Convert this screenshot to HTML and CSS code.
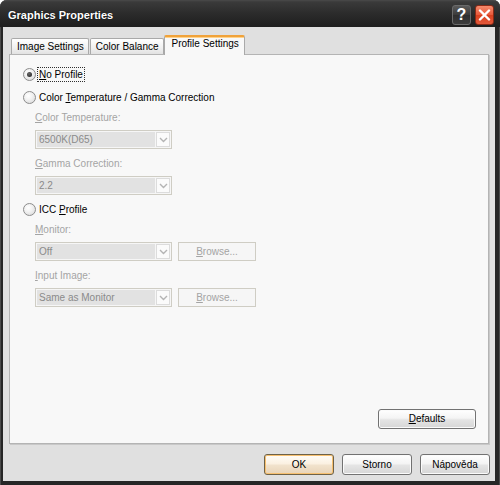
FILE: index.html
```html
<!DOCTYPE html>
<html>
<head>
<meta charset="utf-8">
<title>Graphics Properties</title>
<link rel="stylesheet" href="styles.css">
</head>
<body>
<div class="window">
  <div class="titlebar">
    <span class="title">Graphics Properties</span>
    <div class="caption-btns">
      <span class="cbtn help">?</span>
      <span class="cbtn close"><svg width="13" height="12" viewBox="0 0 13 12"><path d="M2 1.5 L11 10.5 M11 1.5 L2 10.5" stroke="#fff" stroke-width="2.4" stroke-linecap="round"/></svg></span>
    </div>
  </div>
  <div class="client">
    <div class="tabs">
      <div class="tab">Image Settings</div>
      <div class="tab">Color Balance</div>
      <div class="tab active">Profile Settings</div>
    </div>
    <div class="panel">
      <div class="radio-row first"><span class="radio checked"></span><span class="focus"><u>N</u>o Profile</span></div>
      <div class="radio-row second"><span class="radio"></span><span class="rtext">Color <u>T</u>emperature / Gamma Correction</span></div>
      <div class="sub">
        <div class="label"><u>C</u>olor Temperature:</div>
        <div class="field-row"><div class="combo"><span class="value">6500K(D65)</span><span class="arrow"><svg width="9" height="6" viewBox="0 0 9 6"><path d="M1 1 L4.5 4.5 L8 1" fill="none" stroke="#b4b4b4" stroke-width="1.4"/></svg></span></div></div>
        <div class="label"><u>G</u>amma Correction:</div>
        <div class="field-row"><div class="combo"><span class="value">2.2</span><span class="arrow"><svg width="9" height="6" viewBox="0 0 9 6"><path d="M1 1 L4.5 4.5 L8 1" fill="none" stroke="#b4b4b4" stroke-width="1.4"/></svg></span></div></div>
      </div>
      <div class="radio-row third"><span class="radio"></span><span class="rtext">ICC <u>P</u>rofile</span></div>
      <div class="sub">
        <div class="label"><u>M</u>onitor:</div>
        <div class="field-row"><div class="combo"><span class="value">Off</span><span class="arrow"><svg width="9" height="6" viewBox="0 0 9 6"><path d="M1 1 L4.5 4.5 L8 1" fill="none" stroke="#b4b4b4" stroke-width="1.4"/></svg></span></div><span class="browse"><u>B</u>rowse...</span></div>
        <div class="label"><u>I</u>nput Image:</div>
        <div class="field-row"><div class="combo"><span class="value">Same as Monitor</span><span class="arrow"><svg width="9" height="6" viewBox="0 0 9 6"><path d="M1 1 L4.5 4.5 L8 1" fill="none" stroke="#b4b4b4" stroke-width="1.4"/></svg></span></div><span class="browse"><u>B</u>rowse...</span></div>
      </div>
      <button class="btn defaults"><u>D</u>efaults</button>
    </div>
    <div class="footer">
      <button class="btn default-btn">OK</button>
      <button class="btn">Storno</button>
      <button class="btn">Nápověda</button>
    </div>
  </div>
</div>
</body>
</html>
```
FILE: styles.css
```css
html, body {
  margin: 0;
  padding: 0;
  background: #ffffff;
}
body {
  width: 500px;
  height: 485px;
  overflow: hidden;
  font-family: "Liberation Sans", Arial, sans-serif;
  font-size: 10px;
  color: #000;
}
.window {
  width: 500px;
  height: 485px;
  display: flex;
  flex-direction: column;
  background: #262626;
  border-radius: 7px 7px 0 0;
  box-shadow: inset 0 1px 0 #6a6a6a, inset 1px 0 0 #4a4a4a, inset -1px 0 0 #4a4a4a;
  box-sizing: border-box;
}
.titlebar {
  height: 27px;
  flex: none;
  display: flex;
  align-items: flex-start;
  justify-content: space-between;
  padding: 0 6px 0 8px;
  border-radius: 7px 7px 0 0;
  background: linear-gradient(#4a4a4a 0, #3a3a3a 2px, #2c2c2c 13px, #1e1e1e 27px);
}
.title {
  color: #fff;
  font-weight: bold;
  font-size: 11px;
  line-height: 13px;
  margin-top: 9px;
  text-shadow: 0 0 1px #000;
}
.caption-btns {
  display: flex;
  gap: 4px;
  margin-top: 5px;
}
.cbtn {
  width: 17px;
  height: 18px;
  border-radius: 3px;
  display: flex;
  align-items: center;
  justify-content: center;
}
.help {
  border: 1px solid #6a6a6a;
  background: linear-gradient(#5a5a5a, #3a3a3a 50%, #2e2e2e 51%, #3c3c3c);
  color: #fff;
  font-weight: bold;
  font-size: 16px;
  font-family: "Liberation Sans", Arial, sans-serif;
}
.close {
  border: 1px solid #8a2a16;
  background: linear-gradient(#f58a6c, #e8583a 50%, #d8401e 51%, #e2583a);
}
.client {
  flex: 1;
  margin: 0 5px 4px 3px;
  background: #e0e0e0;
  display: flex;
  flex-direction: column;
}
.tabs {
  display: flex;
  align-items: flex-end;
  height: 19px;
  margin-top: 8px;
  padding-left: 8px;
  position: relative;
  z-index: 1;
}
.tab {
  height: 16px;
  box-sizing: border-box;
  padding: 0 4px 0 5px;
  margin-right: 1px;
  border: 1px solid #a9a9a9;
  border-bottom: none;
  border-radius: 2px 2px 0 0;
  background: linear-gradient(#ffffff, #f0f0f0 60%, #e2e2e2);
  line-height: 15px;
  color: #000;
  white-space: nowrap;
}
.tab:nth-child(2) {
  margin-right: 0;
}
.tab.active {
  height: 20px;
  margin-bottom: -1px;
  padding: 0 5px 0 7px;
  border-top: 2px solid #f0a23a;
  background: #f8f8f8;
  line-height: 14px;
  box-shadow: inset 0 1px 0 #ffd28a;
}
.panel {
  flex: 1;
  margin: 0 6px;
  background: #f8f8f8;
  border: 1px solid #b4b4b4;
  box-shadow: 1px 1px 0 #c8c8c8;
  display: flex;
  flex-direction: column;
  padding-left: 13px;
}
.radio-row {
  display: flex;
  align-items: center;
  height: 13px;
  line-height: 13px;
  color: #000;
}
.radio-row.first { margin-top: 13px; }
.radio-row.second { margin-top: 10px; }
.radio-row.third { margin-top: 8px; }
.radio {
  width: 11px;
  height: 11px;
  border: 1px solid #8c8c8c;
  border-radius: 50%;
  background: radial-gradient(circle at 40% 35%, #ffffff 0, #f2f2f2 40%, #d4d4d4 100%);
  flex: none;
  margin-right: 2px;
  display: flex;
  align-items: center;
  justify-content: center;
}
.radio.checked::after {
  content: "";
  width: 5px;
  height: 5px;
  border-radius: 50%;
  background: radial-gradient(circle at 40% 35%, #6a6a6a, #1c1c1c);
}
.focus {
  outline: 1px dotted #303030;
  outline-offset: 0;
  padding: 0 1px;
  line-height: 13px;
}
.rtext {
  padding-left: 1px;
}
u {
  text-decoration: underline;
  text-underline-offset: 1px;
}
.sub {
  padding-left: 12px;
  display: flex;
  flex-direction: column;
}
.label {
  color: #a4a4a4;
  line-height: 13px;
  margin-top: 8px;
}
.sub > .label:first-child { margin-top: 7px; }
.field-row {
  display: flex;
  gap: 6px;
  margin-top: 6px;
  height: 19px;
}
.combo {
  width: 137px;
  height: 19px;
  box-sizing: border-box;
  border: 1px solid #cfcdc4;
  background: #f6f6f6;
  display: flex;
  align-items: stretch;
  padding: 1px;
  gap: 1px;
}
.combo .value {
  flex: 1;
  background: #e2e2e2;
  color: #8a8a8a;
  line-height: 15px;
  padding-left: 2px;
}
.combo .arrow {
  width: 14px;
  box-sizing: border-box;
  border: 1px solid #dcdcdc;
  background: #fbfbfb;
  display: flex;
  align-items: center;
  justify-content: center;
}
.browse {
  width: 78px;
  height: 19px;
  box-sizing: border-box;
  border: 1px solid #cfcdc4;
  background: #f6f6f6;
  color: #a4a4a4;
  text-align: center;
  line-height: 17px;
}
.btn {
  font-family: "Liberation Sans", Arial, sans-serif;
  font-size: 10px;
  color: #000;
  height: 20px;
  box-sizing: border-box;
  border: 1px solid #727272;
  border-radius: 3px;
  background: linear-gradient(#ffffff, #f4f4f4 45%, #e4e4e4 55%, #d6d6d6);
  box-shadow: inset 0 0 0 1px #fbfbfb;
  padding: 0;
  line-height: 16px;
}
.defaults {
  width: 98px;
  align-self: flex-end;
  margin-top: auto;
  margin-right: 12px;
  margin-bottom: 14px;
}
.footer {
  flex: none;
  display: flex;
  justify-content: flex-end;
  padding: 10px 5px 6px 0;
}
.footer .btn {
  width: 70px;
  height: 21px;
  margin-left: 8px;
}
.footer .btn.default-btn {
  border-color: #6e6248;
  background: linear-gradient(#fffdf8, #fbf1e2 45%, #f1e2cc 55%, #e8d4b8);
  box-shadow: inset 0 0 0 1px #f7c070;
}
```
